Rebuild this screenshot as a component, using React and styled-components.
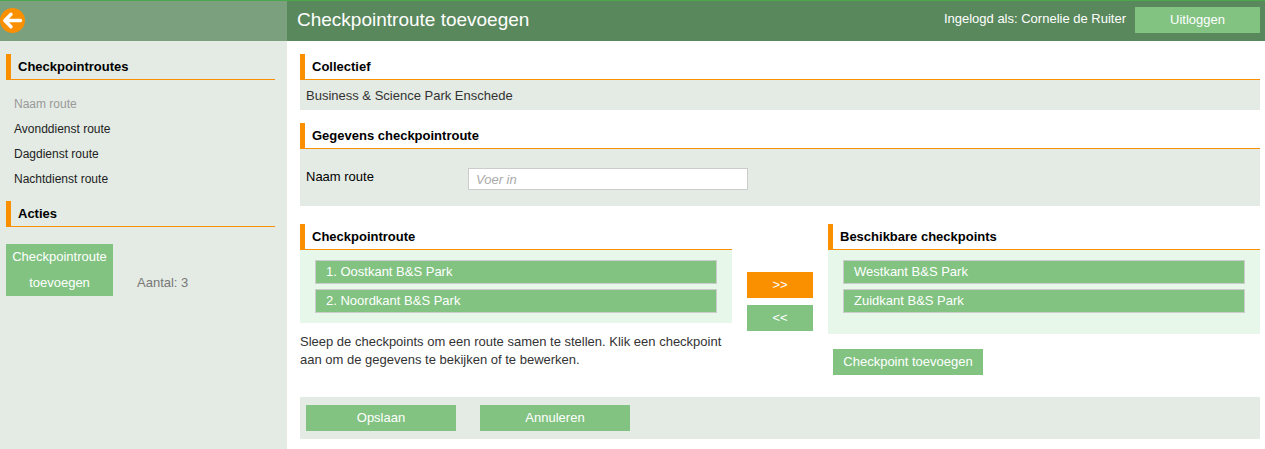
import React from "react";
import styled, { createGlobalStyle } from "styled-components";

const color = {
  orange: "#fa8f00",
  green: "#82c382",
  header: "#59885c",
  sideHeader: "#7ba07e",
  panel: "#e4ebe4",
  drop: "#e7f7ea",
};

const GlobalStyle = createGlobalStyle`
  *, *::before, *::after { box-sizing: border-box; }
  body {
    margin: 0;
    background: #fff;
    color: #333;
    font: 13px/18px "Liberation Sans", Arial, sans-serif;
  }
  button, input { font: inherit; }
  h1, h2, p, ul, ol { margin: 0; padding: 0; }
  ul, ol { list-style: none; }
`;

const Page = styled.div`
  display: grid;
  grid-template-columns: 287px minmax(0, 1fr);
  min-height: 100vh;
  border-top: 1px solid #4ca64c;
`;

const Sidebar = styled.aside`
  background: ${color.panel};
`;

const SideHeader = styled.div`
  height: 40px;
  padding-top: 7px;
  background: ${color.sideHeader};
`;

const BackLink = styled.a`
  display: block;
  width: 25px;
  height: 25px;
`;

const SideContent = styled.div`
  padding: 13px 12px 0 6px;
`;

const SectionTitle = styled.h2`
  display: flex;
  align-items: center;
  height: 26px;
  padding-left: 7px;
  border-left: 5px solid ${color.orange};
  border-bottom: 1px solid ${color.orange};
  color: #000;
  font-size: 13px;
  font-weight: bold;
`;

const RouteNav = styled.ul`
  padding: 12px 8px 9px;
  font-size: 12px;
  line-height: 25px;
`;

const NavCaption = styled.li`
  color: #999;
`;

const NavLink = styled.a`
  color: #222;
  text-decoration: none;
`;

const Actions = styled.div`
  display: flex;
  align-items: flex-end;
  gap: 24px;
  padding-top: 17px;
`;

const Count = styled.span`
  color: #777;
  line-height: 26px;
`;

const Button = styled.button`
  width: ${(p) => p.$width || 150}px;
  padding: 0;
  border: 0;
  background: ${(p) => (p.$active ? color.orange : color.green)};
  color: #fff;
  line-height: 26px;
  cursor: pointer;
`;

const Main = styled.main`
  min-width: 0;
`;

const Header = styled.header`
  display: flex;
  align-items: center;
  height: 40px;
  padding: 0 5px 2px 10px;
  background: ${color.header};
  color: #fff;
`;

const Title = styled.h1`
  flex: 1;
  font-size: 19px;
  font-weight: normal;
`;

const User = styled.span`
  margin-right: 9px;
  padding-bottom: 2px;
`;

const Content = styled.form`
  display: grid;
  padding: 13px 5px 10px 13px;
`;

const Section = styled.section`
  margin-bottom: ${(p) => p.$gap}px;
`;

const Info = styled.p`
  padding: 7px 6px 5px;
  background: ${color.panel};
`;

const Field = styled.div`
  display: flex;
  align-items: flex-start;
  padding: 19px 6px 16px;
  background: ${color.panel};
`;

const Label = styled.label`
  width: 162px;
  color: #000;
`;

const Input = styled.input`
  width: 280px;
  height: 22px;
  padding: 0 7px;
  border: 1px solid #ccc;
  background: #fff;
  &::placeholder {
    color: #aaa;
    font-style: italic;
    opacity: 1;
  }
`;

const Picker = styled.div`
  display: grid;
  grid-template-columns: 45fr 10fr 45fr;
  align-items: start;
  margin-bottom: 22px;
`;

const DropList = styled.ol`
  display: grid;
  align-content: start;
  gap: 5px;
  min-height: ${(p) => p.$minHeight || 0}px;
  padding: 10px 15px;
  background: ${color.drop};
`;

const Checkpoint = styled.button`
  display: block;
  width: 100%;
  height: 24px;
  padding: 0 10px 1px;
  border: 1px solid #ccc;
  background: ${color.green};
  color: #fff;
  text-align: left;
  cursor: grab;
`;

const Note = styled.p`
  padding-top: 10px;
`;

const Transfer = styled.div`
  display: grid;
  justify-content: center;
  gap: 7px;
  padding-top: 48px;
`;

const AddRow = styled.div`
  padding: 15px 5px 0;
`;

const Footer = styled.footer`
  display: flex;
  gap: 24px;
  padding: 8px 6px;
  background: ${color.panel};
`;

const BackIcon = () => (
  <svg width="25" height="25" viewBox="0 0 25 25" aria-hidden="true">
    <circle cx="12.5" cy="12.5" r="12.5" fill={color.orange} />
    <path
      d="M11 6.2L4.8 12.5L11 18.8M5.5 12.5H20.5"
      fill="none"
      stroke="#fff"
      strokeWidth="3.4"
      strokeLinecap="round"
      strokeLinejoin="round"
    />
  </svg>
);

const routes = ["Avonddienst route", "Dagdienst route", "Nachtdienst route"];
const chosen = ["Oostkant B&S Park", "Noordkant B&S Park"];
const available = ["Westkant B&S Park", "Zuidkant B&S Park"];

export default function App() {
  return (
    <>
      <GlobalStyle />
      <Page>
        <Sidebar>
          <SideHeader>
            <BackLink href="#" aria-label="Terug">
              <BackIcon />
            </BackLink>
          </SideHeader>
          <SideContent>
            <SectionTitle>Checkpointroutes</SectionTitle>
            <RouteNav>
              <NavCaption>Naam route</NavCaption>
              {routes.map((name) => (
                <li key={name}>
                  <NavLink href="#">{name}</NavLink>
                </li>
              ))}
            </RouteNav>
            <SectionTitle>Acties</SectionTitle>
            <Actions>
              <Button type="button" $width={107}>
                Checkpointroute toevoegen
              </Button>
              <Count>Aantal: 3</Count>
            </Actions>
          </SideContent>
        </Sidebar>
        <Main>
          <Header>
            <Title>Checkpointroute toevoegen</Title>
            <User>Ingelogd als: Cornelie de Ruiter</User>
            <Button type="button" $width={125}>
              Uitloggen
            </Button>
          </Header>
          <Content onSubmit={(e) => e.preventDefault()}>
            <Section $gap={13}>
              <SectionTitle>Collectief</SectionTitle>
              <Info>Business &amp; Science Park Enschede</Info>
            </Section>
            <Section $gap={18}>
              <SectionTitle>Gegevens checkpointroute</SectionTitle>
              <Field>
                <Label htmlFor="route-name">Naam route</Label>
                <Input id="route-name" type="text" placeholder="Voer in" />
              </Field>
            </Section>
            <Picker>
              <section>
                <SectionTitle>Checkpointroute</SectionTitle>
                <DropList>
                  {chosen.map((name, i) => (
                    <li key={name}>
                      <Checkpoint type="button">{`${i + 1}. ${name}`}</Checkpoint>
                    </li>
                  ))}
                </DropList>
                <Note>
                  Sleep de checkpoints om een route samen te stellen. Klik een checkpoint aan om de
                  gegevens te bekijken of te bewerken.
                </Note>
              </section>
              <Transfer>
                <Button type="button" $width={66} $active>
                  &gt;&gt;
                </Button>
                <Button type="button" $width={66}>
                  &lt;&lt;
                </Button>
              </Transfer>
              <section>
                <SectionTitle>Beschikbare checkpoints</SectionTitle>
                <DropList $minHeight={84}>
                  {available.map((name) => (
                    <li key={name}>
                      <Checkpoint type="button">{name}</Checkpoint>
                    </li>
                  ))}
                </DropList>
                <AddRow>
                  <Button type="button">Checkpoint toevoegen</Button>
                </AddRow>
              </section>
            </Picker>
            <Footer>
              <Button type="submit">Opslaan</Button>
              <Button type="button">Annuleren</Button>
            </Footer>
          </Content>
        </Main>
      </Page>
    </>
  );
}
